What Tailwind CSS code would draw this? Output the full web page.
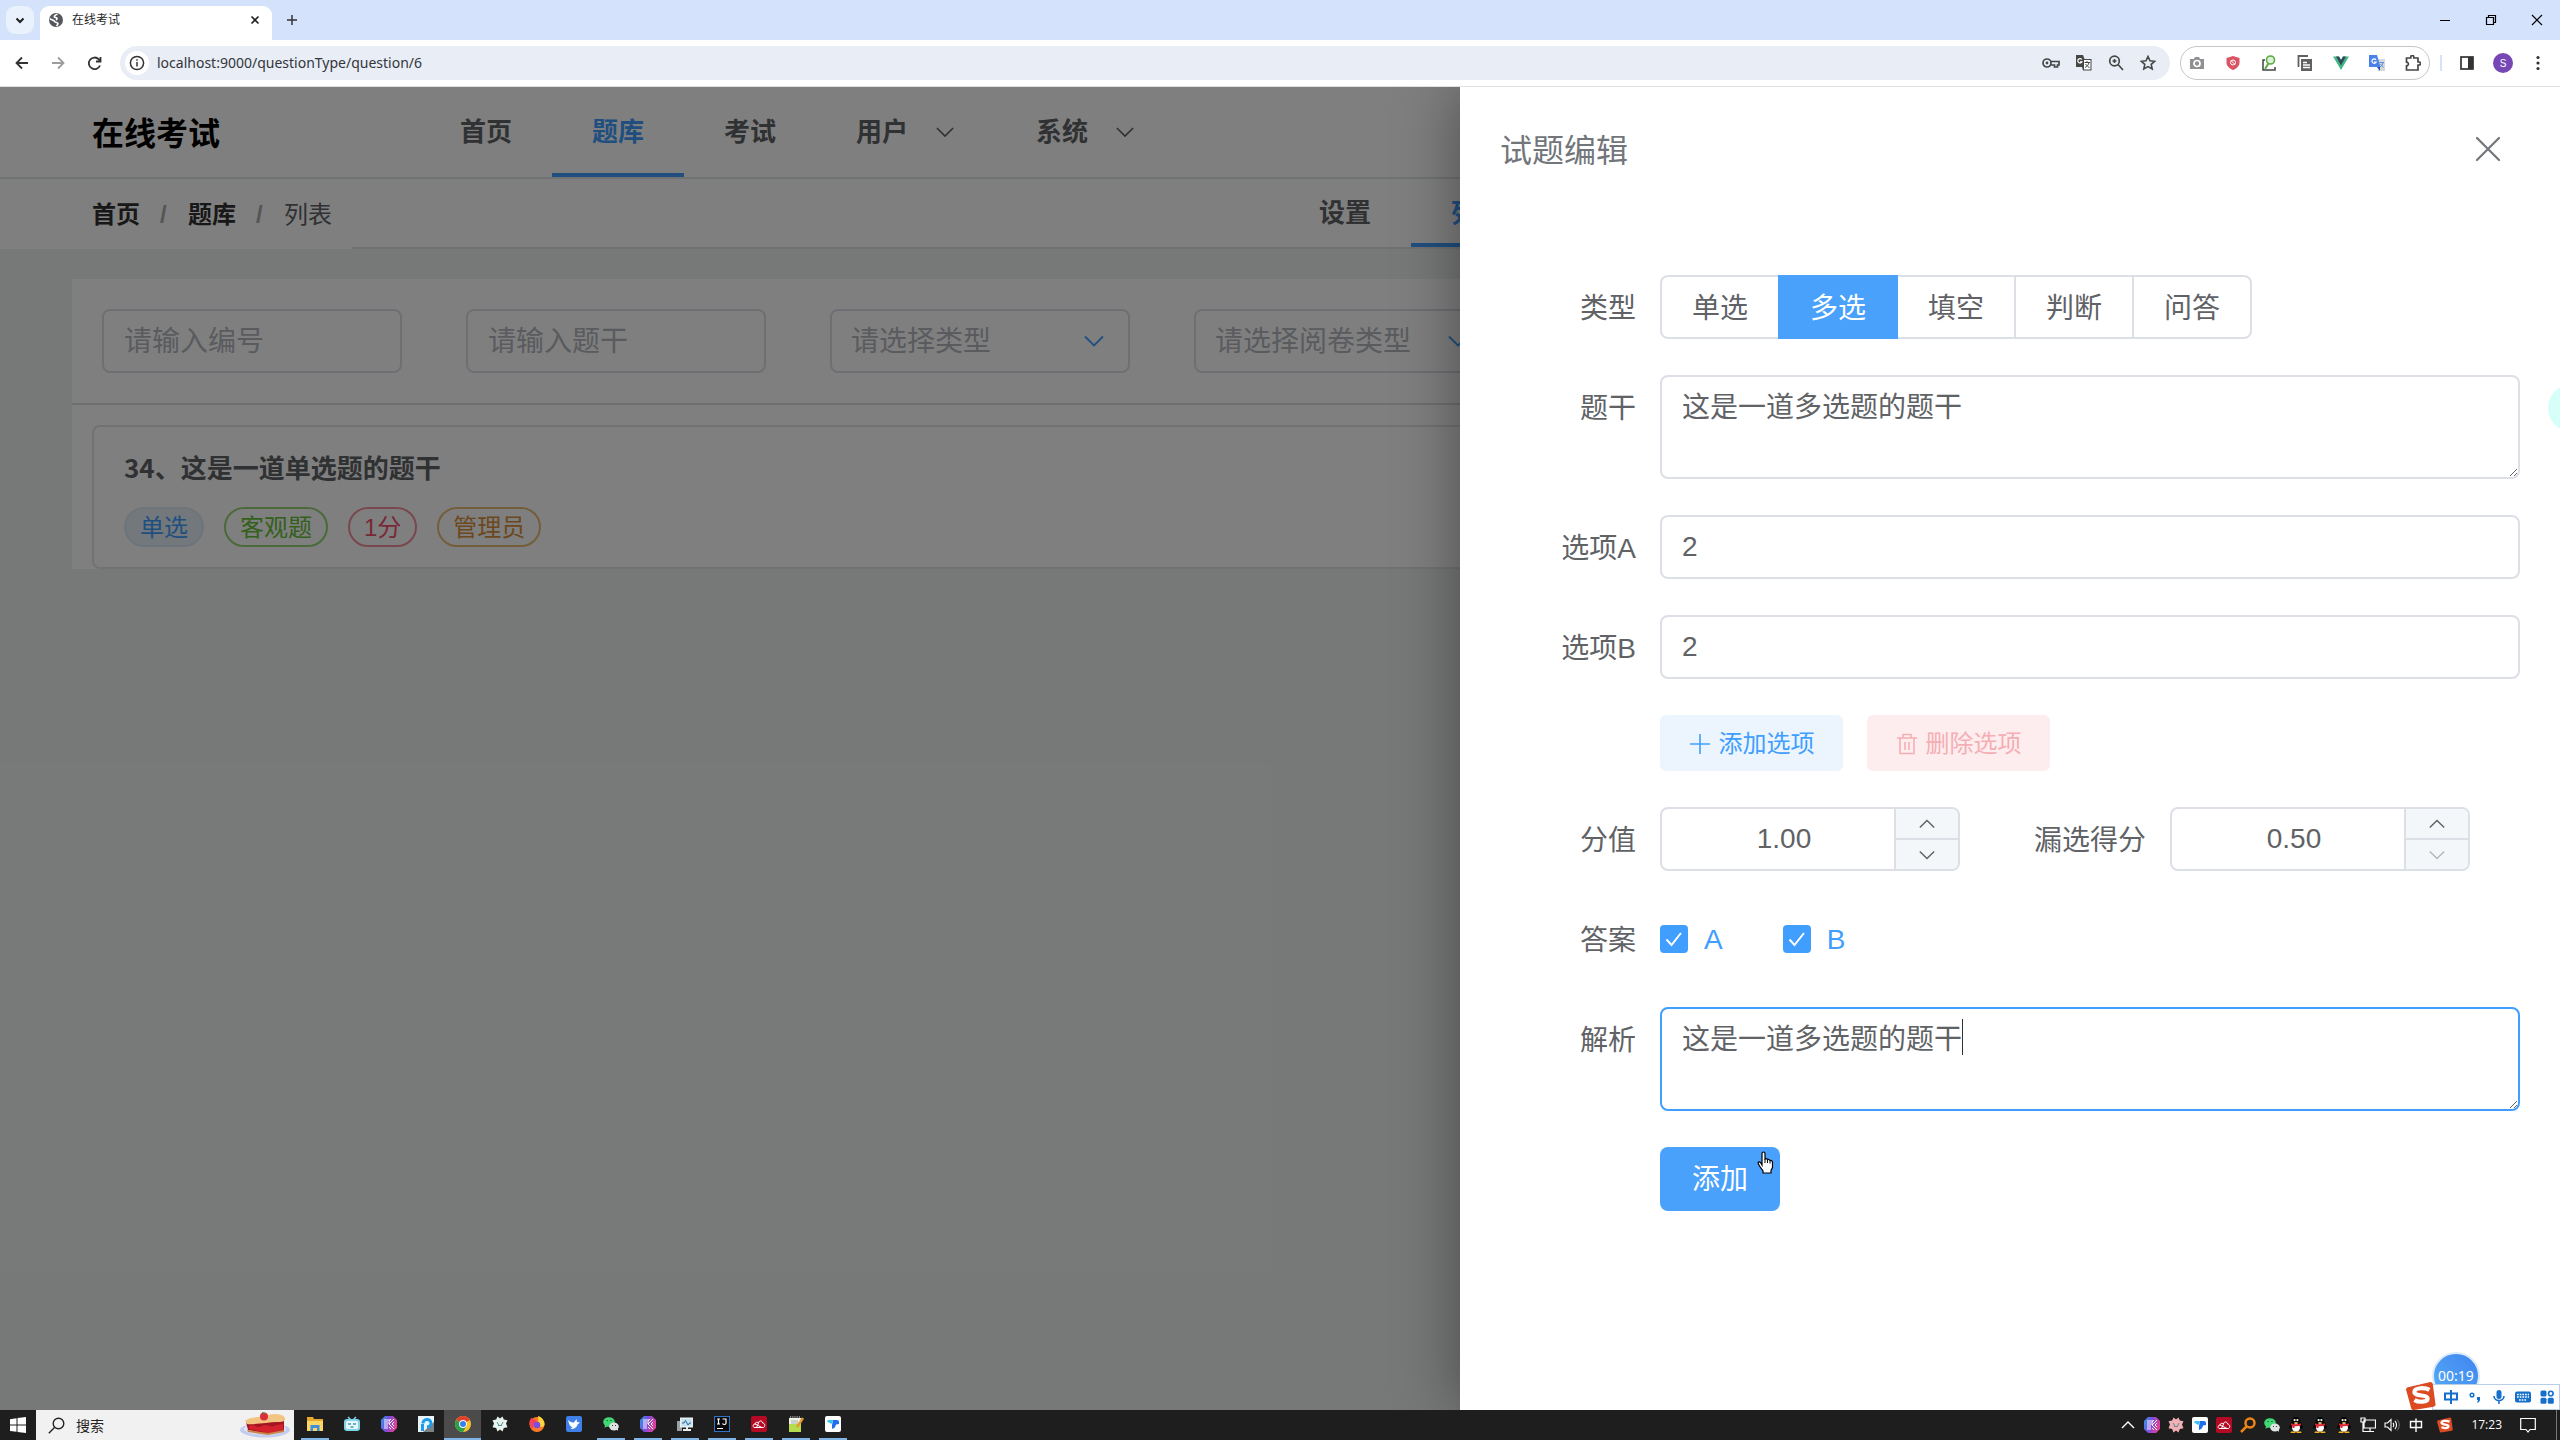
<!DOCTYPE html>
<html lang="zh-CN">
<head>
<meta charset="utf-8">
<meta name="viewport" content="width=device-width, initial-scale=1">
<title>在线考试</title>
<script src="https://cdn.jsdelivr.net/npm/@tailwindcss/browser@4"></script>
</head>
<body class="flex h-screen flex-col overflow-hidden bg-white font-['Liberation_Sans','Noto_Sans_CJK_SC',sans-serif] text-[#606266]">

<!-- Shared icon symbols -->
<svg class="absolute size-0" aria-hidden="true">
  <defs>
    <linearGradient id="kgrad" x1="0" y1="0" x2="1" y2="0.3"><stop offset="0" stop-color="#2f9be8"/><stop offset=".5" stop-color="#7b4be0"/><stop offset="1" stop-color="#e0409a"/></linearGradient>
  </defs>
  <symbol id="chev-down" viewBox="0 0 20 14"><path d="M1 2.500l9 9 9-9" fill="none" stroke="currentColor" stroke-width="1.800"/></symbol>
  <symbol id="chev-up" viewBox="0 0 20 14"><path d="M1 11.500l9-9 9 9" fill="none" stroke="currentColor" stroke-width="1.800"/></symbol>
  <symbol id="kapp" viewBox="0 0 16 16"><path d="M4 0h8l4 4v8l-4 4H4l-4-4V4z" fill="url(#kgrad)"/><path d="M4 3v10M6 3v10M8 3v5M13 3L8 8l5 5M10 3L8 5M8 11l2 2M13 6l-2 2 2 2" fill="none" stroke="#fff" stroke-width="1"/></symbol>
  <symbol id="dingfly" viewBox="0 0 16 16"><rect width="16" height="16" rx="2" fill="#fff"/><path d="M2 5.500Q2 4 4 4h4l-1.500 4z" fill="#35c3f2"/><path d="M8 4h4q2 0 2 2v2l-3 .500q-.500 3.500-4 4.500V9z" fill="#1e6ff0"/></symbol>
  <symbol id="redcloud" viewBox="0 0 16 16"><rect width="16" height="16" rx="2" fill="#b50a24"/><path d="M3 11.500c-1.500-1-1-3.500 1-3.500 0-1.500 2-2.500 3.500-1 .5-3 4-2.500 4 0 2.500 0 3 3.500 1 4.500zM4 8l7 3.500M7.500 7l-2 4.500" fill="none" stroke="#fff" stroke-width="1"/></symbol>
  <symbol id="wechat" viewBox="0 0 16 16"><ellipse cx="6" cy="6" rx="5.800" ry="4.800" fill="#3fd873"/><path d="M2 9l-.5 2.800L5 10z" fill="#3fd873"/><ellipse cx="11" cy="10.500" rx="4.800" ry="4" fill="#dfe3e2"/><path d="M13 13l2 2-.2-3z" fill="#dfe3e2"/><path d="M3.500 4.500h1.200M7.300 4.500h1.200M9 9.500h1M12 9.500h1" stroke="#23432f" stroke-width="1"/></symbol>
  <symbol id="qq" viewBox="0 0 16 16"><path d="M8 0c3 0 4.300 2 4.300 5 1.500 2 3 5 2.500 6.500-.5.600-1.300-.5-1.800-1 0 4-10 4-10 0-.5.500-1.300 1.600-1.800 1C.7 10 2.200 7 3.700 5 3.700 2 5 0 8 0z" fill="#050505"/><ellipse cx="8" cy="10.500" rx="4" ry="4.300" fill="#fff"/><circle cx="6.600" cy="3" r="1.100" fill="#fff"/><circle cx="9.400" cy="3" r="1.100" fill="#fff"/><path d="M5.500 5h5L8 6.300z" fill="#f5b21c"/><path d="M3.200 6.200c3 1.500 6.600 1.500 9.600 0l.4 2C9.500 9.600 6.500 9.600 2.800 8.200zM4.500 8.500h2V11h-2z" fill="#e0202a"/><path d="M3 14.500h4.500V16H2.500zM8.500 14.500H13l.5 1.500h-5z" fill="#f5b21c"/></symbol>
  <symbol id="flower" viewBox="0 0 16 16"><path d="M5.500.5l2.500 2 2.500-2 1.300 3 3.700.8-1.500 3.200 1.500 3.700-3.700.8-1.300 3.500-2.500-2-2.500 2-1.300-3.500-3.700-.8L2 7.500.5 4.300l3.700-.8z" fill="currentColor"/><path d="M5 6l2.500 4M9 10l2-4M6 9.500h4" stroke="#5a8f94" stroke-width="1" fill="none"/></symbol>
  <symbol id="sogou" viewBox="0 0 32 32"><path d="M1 7L26 1q2 0 2.500 2l3 22q0 2-2 2.500L8 31q-2 0-2.500-2L0 9z" fill="#dc4a22"/><path d="M25 9.500c-5-3-16-2.500-16 2.200 0 5 14 2.500 14 7 0 4-9.500 4.500-14 1.500" fill="none" stroke="#fff" stroke-width="4.500"/></symbol>
</svg>

<!-- Browser frame -->
<header class="shrink-0">
  <div class="flex h-10 items-center bg-[#d5e2fb] text-[#1f1f1f]">
    <button aria-label="搜索标签页" class="ml-1.5 grid size-7 place-items-center rounded-[9px] bg-[#e9f1fd]"><svg class="size-3" viewBox="0 0 12 12"><path d="M2.500 4.500L6 8l3.500-3.500" fill="none" stroke="#1f1f1f" stroke-width="2"/></svg></button>
    <div class="ml-1.5 mt-1.5 flex h-[34px] w-[232px] items-center self-end rounded-t-[9px] bg-white px-[9px] pb-1.5">
      <svg class="size-3.5" viewBox="0 0 14 14"><circle cx="7" cy="7" r="7" fill="#54575b"/><path d="M8.500 1.200C5 2 4.500 4.300 6.500 4.500c2 .2 2 1.500.5 2.500M1 5.500c1.500 1.800 4 1.500 5 3.300.5 1.200 2.500.2 3 1.700.2 1-.8 1.200-1.500 2.500" fill="none" stroke="#fff" stroke-width="1.600"/></svg>
      <span class="ml-[9px] flex-1 text-xs">在线考试</span>
      <button aria-label="关闭标签页" class="grid size-4 place-items-center"><svg class="size-2.5" viewBox="0 0 10 10"><path d="M1.500 1.500l7 7M8.500 1.500l-7 7" stroke="#1f1f1f" stroke-width="1.600"/></svg></button>
    </div>
    <button aria-label="新标签页" class="ml-3 grid size-4 place-items-center"><svg class="size-3" viewBox="0 0 12 12"><path d="M6 1v10M1 6h10" stroke="#333" stroke-width="1.500"/></svg></button>
    <div class="ml-auto flex items-center gap-[34px] pr-[17px] text-black">
      <button aria-label="最小化"><svg class="block size-3" viewBox="0 0 12 12"><path d="M1 6.500h10" stroke="currentColor"/></svg></button>
      <button aria-label="还原"><svg class="block size-3" viewBox="0 0 12 12"><path d="M1.500 3.500h7v7h-7zM3.500 3.500v-2h7v7h-2" fill="none" stroke="currentColor" stroke-width="1.200"/></svg></button>
      <button aria-label="关闭"><svg class="block size-3" viewBox="0 0 12 12"><path d="M1 1l10 10M11 1L1 11" stroke="currentColor" stroke-width="1.200"/></svg></button>
    </div>
  </div>
  <div class="flex h-[47px] items-center border-b border-[#dfe1e5] bg-white text-[#444746]">
    <div class="flex gap-[22px] pl-[15px]">
      <button aria-label="后退"><svg class="block size-3.5" viewBox="0 0 14 14"><path d="M13 7H2M7 1.500L1.500 7 7 12.500" fill="none" stroke="#333" stroke-width="1.800"/></svg></button>
      <button aria-label="前进"><svg class="block size-3.5" viewBox="0 0 14 14"><path d="M1 7h11M7 1.500L12.500 7 7 12.500" fill="none" stroke="#9b9d9f" stroke-width="1.800"/></svg></button>
      <button aria-label="重新加载"><svg class="block size-[15px]" viewBox="0 0 15 15"><path d="M13 9.500A5.800 5.800 0 1 1 11.800 3.300L13.500 5M13.500 1v4.500H9" fill="none" stroke="#333" stroke-width="1.800"/></svg></button>
    </div>
    <div class="ml-[18px] flex h-[34px] flex-1 items-center rounded-full bg-[#e9edf6] pl-[5px] pr-3.5">
      <button aria-label="网站信息" class="grid size-6 place-items-center rounded-full bg-white"><svg class="size-4" viewBox="0 0 16 16"><circle cx="8" cy="8" r="6.600" fill="none" stroke="#333" stroke-width="1.500"/><path d="M8 7v4.500M8 4.200v1.600" stroke="#333" stroke-width="1.500"/></svg></button>
      <input aria-label="地址" value="localhost:9000/questionType/question/6" class="ml-2 flex-1 bg-transparent font-['Noto_Sans',sans-serif] text-sm text-[#33363a] outline-none">
      <div class="flex items-center gap-4">
        <svg class="h-4 w-[18px]" viewBox="0 0 18 16"><circle cx="5" cy="8" r="4" fill="none" stroke="currentColor" stroke-width="1.700"/><circle cx="5" cy="8" r="1.400" fill="currentColor"/><path d="M9 6.500h8V10h-1.500v2h-3v-2H9" fill="none" stroke="currentColor" stroke-width="1.700"/></svg>
        <svg class="size-4" viewBox="0 0 16 16"><path d="M0 0h7l1.500 4H15.500v11.500H7L6 12H0z" fill="#444746"/><path d="M8 5h6.500v9.500H8z" fill="#fff"/><path d="M5.800 4.500a2.200 2.200 0 1 0 .2 2.300H4" fill="none" stroke="#fff" stroke-width="1.200"/><path d="M8.500 7.500h5.500M11 6v1.500M13 7.500c-.5 2.500-2 4-4 5M9.500 9l4 4" fill="none" stroke="#444746"/></svg>
        <svg class="size-4" viewBox="0 0 16 16"><circle cx="6.500" cy="6" r="4.800" fill="none" stroke="currentColor" stroke-width="1.700"/><path d="M6.500 4v4M4.500 6h4M10 9.500l5 5.500" stroke="currentColor" stroke-width="1.700"/></svg>
        <svg class="size-4" viewBox="0 0 16 16"><path d="M8 1.500l2 4.300 4.700.5-3.500 3.100 1 4.600L8 11.600 3.800 14l1-4.600L1.300 6.300 6 5.800z" fill="none" stroke="currentColor" stroke-width="1.600"/></svg>
      </div>
    </div>
    <div class="ml-2.5 flex h-[34px] w-[250px] items-center justify-between rounded-full border border-[#c4c7c5] px-2">
      <svg class="size-4" viewBox="0 0 16 16"><path d="M1 4h4l1-2h4l1 2h4v10H1z" fill="#8e9092"/><circle cx="8" cy="8.500" r="3" fill="none" stroke="#fff" stroke-width="1.700"/></svg>
      <svg class="size-4" viewBox="0 0 16 16"><path d="M8 1l6.500 2v4.500c0 3.500-3 6-6.500 7.500C4.500 13.500 1.500 11 1.500 7.500V3z" fill="#d95563"/><circle cx="8" cy="7.500" r="2.500" fill="none" stroke="#fff"/><path d="M6.300 5.800l3.400 3.400" stroke="#fff"/></svg>
      <svg class="size-4" viewBox="0 0 16 16"><path d="M4 5H2v10h12v-3" fill="none" stroke="#444" stroke-width="1.500"/><circle cx="9.500" cy="5" r="4" fill="#d9f0dc" stroke="#5cab3c" stroke-width="1.600"/><path d="M7.500 8.500L4 14" stroke="#5cab3c" stroke-width="2"/></svg>
      <svg class="size-4" viewBox="0 0 16 16"><path d="M11 1H1.500v11" fill="none" stroke="#5f6163" stroke-width="1.800"/><path d="M4 4h11v12H4z" fill="#5f6163"/><path d="M6 7.500h4M6 10h7M6 12.500h7" stroke="#fff" stroke-width="1.300"/></svg>
      <svg class="size-4" viewBox="0 0 16 16"><path d="M0 1.500h6L8 5l2-3.500h6L8 15z" fill="#42b883"/><path d="M3 1.500h3L8 5l2-3.500h3L8 10.500z" fill="#35495e"/></svg>
      <svg class="size-4" viewBox="0 0 16 16"><path d="M7 4h9v12H9z" fill="#d6d8da"/><path d="M0 0h8l3.500 12H0z" fill="#4b82ea"/><path d="M11 12v4l-3-4z" fill="#2b55b8"/><path d="M7 4.800a2.200 2.200 0 1 0 .2 2.200H5" fill="none" stroke="#fff" stroke-width="1.200"/><path d="M10.500 7.500H15M14 8c-.5 2-1.500 3-3 4M11.500 9l3 3.500" fill="none" stroke="#5f8fd8"/></svg>
      <svg class="size-4" viewBox="0 0 16 16"><path d="M1.500 3h4.300V2a1.500 1.500 0 0 1 3 0v1H13v4h1a1.500 1.500 0 0 1 0 3h-1v5H1.500v-4.200c2.500 0 2.500-3.600 0-3.600z" fill="none" stroke="#444746" stroke-width="1.700"/></svg>
    </div>
    <span class="ml-2.5 h-4 w-0.5 bg-[#d5e2fb]"></span>
    <div class="flex items-center gap-[19px] pl-[18px] pr-4">
      <svg class="size-3.5" viewBox="0 0 14 14"><rect x="1" y="1" width="12" height="12" fill="none" stroke="#333" stroke-width="1.700"/><path d="M8 1h5v12H8z" fill="#333"/></svg>
      <span class="grid size-5 place-items-center rounded-full bg-[#7747b5] text-[10px] text-white">S</span>
      <svg class="h-4 w-3" viewBox="0 0 12 16"><g fill="#333"><circle cx="6" cy="2.500" r="1.600"/><circle cx="6" cy="8" r="1.600"/><circle cx="6" cy="13.500" r="1.600"/></g></svg>
    </div>
  </div>
</header>

<div class="relative min-h-0 flex-1 overflow-hidden bg-[#eff3f2]">
  <!-- Main page -->
  <nav class="flex h-[92px] border-b-2 border-[#e0e6e6] bg-white pl-[92px] text-[26px] font-bold text-[#606266] *:pt-1">
    <a href="#" class="flex w-[328px] items-center text-[32px] text-black">在线考试</a>
    <a href="#" class="flex items-center border-b-4 border-transparent px-10">首页</a>
    <a href="#" class="flex items-center border-b-4 border-[#409eff] px-10 text-[#409eff]">题库</a>
    <a href="#" class="flex items-center border-b-4 border-transparent px-10">考试</a>
    <a href="#" class="flex items-center gap-7 border-b-4 border-transparent pl-10 pr-[42px]">用户<svg class="h-3.5 w-[18px]"><use href="#chev-down"/></svg></a>
    <a href="#" class="flex items-center gap-7 border-b-4 border-transparent pl-10 pr-[42px]">系统<svg class="h-3.5 w-[18px]"><use href="#chev-down"/></svg></a>
  </nav>
  <div class="flex h-[70px] bg-white">
    <div class="flex w-[352px] items-center gap-5 pl-[92px] pt-0.5 text-2xl">
      <a href="#" class="font-bold text-[#303133]">首页</a><span class="w-2 font-bold text-[#a8abb2]">/</span>
      <a href="#" class="font-bold text-[#303133]">题库</a><span class="w-2 font-bold text-[#a8abb2]">/</span>
      <span class="whitespace-nowrap">列表</span>
    </div>
    <div class="flex flex-1 justify-end border-b-2 border-[#dfe3e6] pr-[1017px] text-[26px] font-bold *:pt-1">
      <a href="#" class="flex items-center border-b-4 border-transparent px-10">设置</a>
      <a href="#" class="flex items-center border-b-4 border-[#409eff] px-10 text-[#409eff]">列表</a>
    </div>
  </div>
  <main class="mx-[72px] mt-[30px] bg-white">
    <form class="flex gap-16 border-b-2 border-[#dcdfe2] px-[30px] py-[30px] text-[28px]">
      <input aria-label="编号" placeholder="请输入编号" class="h-16 w-[300px] rounded-lg border-2 border-[#dcdfe6] px-5 pt-0.5 placeholder:text-[#b4b7bd]">
      <input aria-label="题干" placeholder="请输入题干" class="h-16 w-[300px] rounded-lg border-2 border-[#dcdfe6] px-5 pt-0.5 placeholder:text-[#b4b7bd]">
      <div class="relative">
        <select aria-label="类型" class="h-16 w-[300px] appearance-none rounded-lg border-2 border-[#dcdfe6] pl-[19px] pr-5 pt-0.5 text-[#b4b7bd]"><option>请选择类型</option></select>
        <svg class="pointer-events-none absolute right-[26px] top-6 h-4 w-5 text-[#409eff]"><use href="#chev-down"/></svg>
      </div>
      <div class="relative">
        <select aria-label="阅卷类型" class="h-16 w-[300px] appearance-none rounded-lg border-2 border-[#dcdfe6] pl-[19px] pr-5 pt-0.5 text-[#b4b7bd]"><option>请选择阅卷类型</option></select>
        <svg class="pointer-events-none absolute right-[26px] top-6 h-4 w-5 text-[#409eff]"><use href="#chev-down"/></svg>
      </div>
    </form>
    <div class="px-5 pt-5">
      <article class="rounded-lg border-2 border-[#e0e4e8] px-[30px] pb-5 pt-5">
        <h2 class="font-['Noto_Sans_CJK_SC',sans-serif] text-[26px] font-bold leading-10">34、这是一道单选题的题干</h2>
        <div class="mt-5 flex gap-5 text-2xl *:flex *:h-10 *:items-center *:rounded-full *:border-2 *:px-3.5 *:pt-0.5">
          <span class="border-[#dbe9f5] bg-[#e6f1f8] text-[#409eff]">单选</span>
          <span class="border-[#95d475] text-[#67c23a]">客观题</span>
          <span class="border-[#f0909c] text-[#f0506c]">1分</span>
          <span class="border-[#e6bc72] text-[#d9903c]">管理员</span>
        </div>
      </article>
    </div>
  </main>

  <div class="absolute inset-0 bg-black/50"></div>

  <!-- Drawer -->
  <aside role="dialog" aria-label="试题编辑" class="absolute inset-y-0 right-0 w-[1100px] max-w-full bg-white px-10 shadow-[0_0_60px_rgba(0,0,0,0.4)]">
    <header class="flex items-center justify-between pt-10">
      <h1 class="text-[32px] leading-[48px] text-[#72767b]">试题编辑</h1>
      <button aria-label="关闭" class="mb-1 mr-5"><svg class="block size-6" viewBox="0 0 24 24"><path d="M1 1l22 22M23 1L1 23" stroke="#72767b" stroke-width="2.200" stroke-linecap="round"/></svg></button>
    </header>
    <form class="mt-[100px] flex flex-col gap-9 text-[28px]">
      <div class="flex">
        <span class="h-16 w-40 shrink-0 pr-6 pt-0.5 text-right leading-[64px]">类型</span>
        <div role="radiogroup" aria-label="类型" class="flex h-16 *:relative *:flex *:w-[120px] *:items-center *:justify-center *:border-2 *:border-[#dcdfe6] *:pt-1 *:not-first:-ml-0.5">
          <label class="rounded-l-lg"><input type="radio" name="kind" class="sr-only">单选</label>
          <label class="z-10 border-[#49a1fb]! bg-[#49a1fb] text-white"><input type="radio" name="kind" checked class="sr-only">多选</label>
          <label><input type="radio" name="kind" class="sr-only">填空</label>
          <label><input type="radio" name="kind" class="sr-only">判断</label>
          <label class="rounded-r-lg"><input type="radio" name="kind" class="sr-only">问答</label>
        </div>
      </div>
      <div class="flex">
        <label for="stem" class="h-16 w-40 shrink-0 pr-6 pt-0.5 text-right leading-[64px]">题干</label>
        <textarea id="stem" class="h-[104px] flex-1 resize rounded-lg border-2 border-[#dcdfe6] px-5 pt-2.5 leading-[42px]">这是一道多选题的题干</textarea>
      </div>
      <div class="flex">
        <label for="optA" class="h-16 w-40 shrink-0 pr-6 pt-0.5 text-right leading-[64px]">选项A</label>
        <input id="optA" value="2" class="h-16 min-w-0 flex-1 rounded-lg border-2 border-[#dcdfe6] px-5">
      </div>
      <div class="flex">
        <label for="optB" class="h-16 w-40 shrink-0 pr-6 pt-0.5 text-right leading-[64px]">选项B</label>
        <input id="optB" value="2" class="h-16 min-w-0 flex-1 rounded-lg border-2 border-[#dcdfe6] px-5">
      </div>
      <div class="flex gap-6 pl-40 text-2xl">
        <button type="button" class="flex h-14 w-[183px] items-center justify-center gap-2 rounded-md bg-[#ecf5fd] pt-0.5 text-[#409eff]"><svg class="size-[22px]" viewBox="0 0 22 22"><path d="M11 1v20M1 11h20" stroke="currentColor" stroke-width="1.600"/></svg>添加选项</button>
        <button type="button" disabled class="flex h-14 w-[183px] items-center justify-center gap-2 rounded-md bg-[#fdedee] pt-0.5 text-[#f5aeb4]"><svg class="size-[22px]" viewBox="0 0 22 22"><path d="M1 5h20M7 5V1.500h8V5M4 5v15.500h14V5M9 9v8M13 9v8" fill="none" stroke="currentColor" stroke-width="1.600"/></svg>删除选项</button>
      </div>
      <div class="flex">
        <label for="score" class="h-16 w-40 shrink-0 pr-6 pt-0.5 text-right leading-[64px]">分值</label>
        <div class="flex h-16 w-[300px] overflow-hidden rounded-lg border-2 border-[#dcdfe6]">
          <input id="score" value="1.00" class="min-w-0 flex-1 pl-3 text-center">
          <div class="flex w-16 flex-col border-l-2 border-[#dcdfe6] bg-[#f4f7f9]">
            <button type="button" aria-label="增加" class="grid flex-1 place-items-center border-b-2 border-[#dcdfe6]"><svg class="h-3 w-4"><use href="#chev-up"/></svg></button>
            <button type="button" aria-label="减少" class="grid flex-1 place-items-center"><svg class="h-3 w-4"><use href="#chev-down"/></svg></button>
          </div>
        </div>
        <label for="partial" class="h-16 w-[210px] shrink-0 pr-6 pt-0.5 text-right leading-[64px]">漏选得分</label>
        <div class="flex h-16 w-[300px] overflow-hidden rounded-lg border-2 border-[#dcdfe6]">
          <input id="partial" value="0.50" class="min-w-0 flex-1 pl-3 text-center">
          <div class="flex w-16 flex-col border-l-2 border-[#dcdfe6] bg-[#f4f7f9]">
            <button type="button" aria-label="增加" class="grid flex-1 place-items-center border-b-2 border-[#dcdfe6]"><svg class="h-3 w-4"><use href="#chev-up"/></svg></button>
            <button type="button" disabled aria-label="减少" class="grid flex-1 place-items-center text-[#b4b8be]"><svg class="h-3 w-4"><use href="#chev-down"/></svg></button>
          </div>
        </div>
      </div>
      <div class="flex h-16 items-center">
        <span class="h-16 w-40 shrink-0 pr-6 pt-0.5 text-right leading-[64px]">答案</span>
        <div class="flex gap-[60px] text-[#409eff]">
          <label class="flex items-center gap-4"><span class="relative grid size-7 place-items-center"><input type="checkbox" checked class="size-7 appearance-none rounded bg-[#409eff]"><svg class="pointer-events-none absolute size-[18px]" viewBox="0 0 18 18"><path d="M1.500 9.500l5 5.500L16 3" fill="none" stroke="#fff" stroke-width="2"/></svg></span><span class="pt-0.5">A</span></label>
          <label class="flex items-center gap-4"><span class="relative grid size-7 place-items-center"><input type="checkbox" checked class="size-7 appearance-none rounded bg-[#409eff]"><svg class="pointer-events-none absolute size-[18px]" viewBox="0 0 18 18"><path d="M1.500 9.500l5 5.500L16 3" fill="none" stroke="#fff" stroke-width="2"/></svg></span><span class="pt-0.5">B</span></label>
        </div>
      </div>
      <div class="flex">
        <label for="analysis" class="h-16 w-40 shrink-0 pr-6 pt-0.5 text-right leading-[64px]">解析</label>
        <div class="relative flex flex-1">
          <textarea id="analysis" class="h-[104px] flex-1 resize rounded-lg border-2 border-[#409eff] px-5 pt-2.5 leading-[42px]">这是一道多选题的题干</textarea>
          <span class="absolute left-[302px] top-3 h-9 w-px bg-[#303133]"></span>
        </div>
      </div>
      <div class="relative ml-40 w-[120px]">
        <button type="button" class="h-16 w-full rounded-lg bg-[#49a1fb] pt-0.5 text-white">添加</button>
        <svg class="absolute right-1.5 top-1 h-[23px] w-[17px]" viewBox="0 0 17 23"><path d="M5 14V2.500q0-1.500 1.500-1.500T8 2.500V8q1.500-1 2.500.5Q12 7.700 13 9.500q2-.3 2.500 1.500v5.500l-1.500 3V22H6v-2L2.500 15 1 12q.5-2 2.500-.5z" fill="#fff" stroke="#000" stroke-width="1.200"/><path d="M8 8v4M10.500 9v3M13 10v2.500" stroke="#000" stroke-width="1"/></svg>
      </div>
    </form>
  </aside>

  <!-- Floating helpers -->
  <span class="absolute -right-9 top-[297px] size-12 rounded-full bg-[#d5fff8]"></span>
  <div class="absolute bottom-[10px] right-20 grid size-12 place-items-center rounded-full border-2 border-[#dcebfb] bg-linear-to-bl from-[#3f83ee] to-[#58aef8] font-['Noto_Sans',sans-serif] text-sm text-white">00:19</div>
  <div class="absolute bottom-0 right-0 flex h-[26px] w-32 items-center border border-[#b9cfe6] bg-white pl-2.5 text-[#1470cc]">
    <svg class="absolute -left-7 -top-1 h-[30px] w-8"><use href="#sogou"/></svg>
    <div class="flex items-center gap-2 text-[#1470cc]">
      <svg class="size-4" viewBox="0 0 16 16"><path d="M2 4.500h12v6H2zM8 1v14" fill="none" stroke="currentColor" stroke-width="2"/></svg>
      <svg class="size-4" viewBox="0 0 16 16"><circle cx="5" cy="6" r="1.800" fill="none" stroke="currentColor" stroke-width="1.500"/><path d="M10 8h3v3q0 2-3 3l1-3h-1z" fill="currentColor"/></svg>
      <svg class="size-4" viewBox="0 0 16 16"><rect x="5.500" y="1" width="5" height="9" rx="2.500" fill="currentColor"/><path d="M3 7c0 6 10 6 10 0M8 11.500V15" fill="none" stroke="currentColor" stroke-width="1.600"/></svg>
      <svg class="size-4" viewBox="0 0 16 16"><rect y="2.500" width="16" height="11" rx="2" fill="currentColor"/><path d="M2 5.500h12M2 8h12M4 11h8" stroke="#fff" stroke-width="1.400" stroke-dasharray="1.700 1"/></svg>
      <svg class="size-4" viewBox="0 0 16 16"><g fill="currentColor"><rect x="1.500" y="1.500" width="6" height="6" rx="1.500"/><rect x="1.500" y="8.800" width="6" height="6" rx="1.500"/><rect x="8.800" y="8.800" width="6" height="6" rx="1.500"/></g><circle cx="11.800" cy="4.500" r="2.300" fill="none" stroke="currentColor" stroke-width="1.600"/></svg>
    </div>
  </div>
</div>

<!-- Taskbar -->
<footer class="flex h-[30px] shrink-0 items-stretch bg-[#1e1e1e] text-white">
  <button aria-label="开始" class="grid w-9 place-items-center"><svg class="size-4" viewBox="0 0 16 16"><path d="M0 2.200l6.500-1v6.300H0zM7.500 1L16 0v7.500H7.500zM0 8.500h6.500v6.300L0 14zM7.500 8.500H16V16l-8.500-1z" fill="#fff"/></svg></button>
  <div class="flex w-[258px] items-center bg-[#f1f1f1] pl-3 text-[#222]">
    <svg class="size-[17px]" viewBox="0 0 17 17"><circle cx="10.500" cy="6.500" r="5.300" fill="none" stroke="#222" stroke-width="1.400"/><path d="M6.500 10.500L.8 16.300" stroke="#222" stroke-width="1.400"/></svg>
    <input aria-label="搜索" placeholder="搜索" class="ml-[11px] w-24 pt-0.5 text-sm placeholder:text-[#222]">
    <svg class="ml-auto mr-1 h-[26px] w-[50px]" viewBox="0 0 50 26"><ellipse cx="25" cy="18" rx="25" ry="7.500" fill="#c3cdf0"/><ellipse cx="25" cy="17" rx="21" ry="5.500" fill="#e3e8fa"/><path d="M6 10l38-3v12l-16 3L8 18z" fill="#a31621"/><path d="M9 14c5-3 8 3 13 0s8 2 12 0 6-1 9-2v6l-15 3-19-4z" fill="#d3212d"/><path d="M5 9C10 4 20 6 28 3c7-2 15-1 17 3 1 3-3 4-8 4-9 0-22 3-30 2z" fill="#f3c583"/><path d="M7 18l21 3 16-3v2l-16 3-20-3z" fill="#c98446"/><circle cx="24" cy="4.500" r="4" fill="#d9303c"/><path d="M22 .5l4 1" stroke="#4a9a3c"/></svg>
  </div>
  <div class="ml-0.5 flex *:grid *:w-[37px] *:place-items-center *:border-b-2 *:border-transparent">
    <button aria-label="文件资源管理器" class="relative after:absolute after:-bottom-0.5 after:h-0.5 after:w-7 after:bg-[#7fb5e6]"><svg class="size-4" viewBox="0 0 16 16"><path d="M0 1h6l1 2h9v12H0z" fill="#e8a92b"/><path d="M0 5h16v10H0z" fill="#fbd667"/><path d="M3.500 15V9h9v6h-2.500v-3H6v3z" fill="#3f90d8"/></svg></button>
    <button aria-label="视频"><svg class="size-4" viewBox="0 0 16 16"><path d="M4 1l3 3M12 1L9 4" stroke="#7fd4ea" stroke-width="1.500"/><rect y="3" width="16" height="12" rx="3" fill="#7fd4ea"/><rect x="2" y="5" width="12" height="8" rx="1.500" fill="#e8f8fc"/><path d="M4 8h3M9 8h3M6.500 11h3" stroke="#3d9ebd" stroke-width="1.300"/></svg></button>
    <button aria-label="应用"><svg class="size-4"><use href="#kapp"/></svg></button>
    <button aria-label="图片处理"><svg class="size-4" viewBox="0 0 16 16"><path d="M0 0h16v16H0z" fill="#e9f4fa"/><path d="M16 6v10H5z" fill="#7a8288"/><path d="M4.500 15V8M5 7.500a4 3.800 0 1 1 4 3.500" fill="none" stroke="#1e9ce8" stroke-width="3"/></svg></button>
    <button aria-label="Chrome" class="border-[#7fb5e6]! bg-[#4b4b4b]"><svg class="size-4" viewBox="0 0 16 16"><circle cx="8" cy="8" r="8" fill="#f7c52b"/><path d="M8 8L1.100 4a8 8 0 0 1 13.800 0z" fill="#e0412f"/><path d="M8 8L1.100 4A8 8 0 0 0 8 16l3.500-6z" fill="#2c9f4b"/><circle cx="8" cy="8" r="3.900" fill="#fff"/><circle cx="8" cy="8" r="3" fill="#3a7ff0"/></svg></button>
    <button aria-label="工具"><svg class="size-4 text-[#e8f4ee]"><use href="#flower"/></svg></button>
    <button aria-label="Firefox"><svg class="size-4" viewBox="0 0 16 16"><circle cx="8" cy="8.500" r="7.500" fill="#ff7a26"/><path d="M9 0c4 1 7 5 6.500 9-3 5-8-1-6-4z" fill="#ffd43c"/><path d="M.5 8C0 4 2 3 2.500 1.500 4 4 6 3 8 5l-5 8z" fill="#f5415a"/><circle cx="8" cy="9" r="3.300" fill="#7a4fe0"/></svg></button>
    <button aria-label="飞鸟"><svg class="size-4" viewBox="0 0 16 16"><rect width="16" height="16" rx="2" fill="#3f7fe8"/><path d="M2 4c2 2 4 2.500 6 2.500L10.500 3l.5 3 3 .5-2.500 2c-.5 3-4 5-7 4.500l2-1.500C4 10.500 3 8 2 4z" fill="#fff"/></svg></button>
    <button aria-label="微信" class="relative after:absolute after:-bottom-0.5 after:h-0.5 after:w-7 after:bg-[#7fb5e6]"><svg class="size-4"><use href="#wechat"/></svg></button>
    <button aria-label="应用" class="relative after:absolute after:-bottom-0.5 after:h-0.5 after:w-7 after:bg-[#7fb5e6]"><svg class="size-4"><use href="#kapp"/></svg></button>
    <button aria-label="监视器" class="relative after:absolute after:-bottom-0.5 after:h-0.5 after:w-7 after:bg-[#7fb5e6]"><svg class="size-4" viewBox="0 0 16 16"><path d="M0 5h5v10H0z" fill="#9aa2a6"/><path d="M3 1.500h13v10H3z" fill="#e9edef"/><path d="M4.500 3h10v7h-10z" fill="#bfe3ef"/><path d="M5 7h2l1.500-2.500L11 9l1.500-2H14" fill="none" stroke="#2f5f9f"/><path d="M6 14h8M10 11v3" stroke="#e9edef" stroke-width="2"/></svg></button>
    <button aria-label="IDE" class="relative after:absolute after:-bottom-0.5 after:h-0.5 after:w-7 after:bg-[#7fb5e6]"><svg class="size-4" viewBox="0 0 16 16"><rect x=".5" y=".5" width="15" height="15" fill="#0a0a0c" stroke="#2e74c4"/><path d="M3 3h3M4.500 3v5M3 8h3M8.500 3H12v4q0 1.500-1.500 1.500T8.500 7.500M3 12.500h6" fill="none" stroke="#fff" stroke-width="1.200"/></svg></button>
    <button aria-label="云服务" class="relative after:absolute after:-bottom-0.5 after:h-0.5 after:w-7 after:bg-[#7fb5e6]"><svg class="size-4"><use href="#redcloud"/></svg></button>
    <button aria-label="记事本" class="relative after:absolute after:-bottom-0.5 after:h-0.5 after:w-7 after:bg-[#7fb5e6]"><svg class="size-4" viewBox="0 0 16 16"><path d="M1 2h12v14H1z" fill="#f1f3e8"/><path d="M1 8h12v8H1z" fill="#b6dc50"/><path d="M2 1h10" stroke="#888" stroke-width="2" stroke-dasharray="1.200 1"/><path d="M3 5h7M3 7h7" stroke="#a7adae"/><path d="M15 2l-6 9" stroke="#e39a2c" stroke-width="2.500"/></svg></button>
    <button aria-label="待办" class="relative after:absolute after:-bottom-0.5 after:h-0.5 after:w-7 after:bg-[#7fb5e6]"><svg class="size-4"><use href="#dingfly"/></svg></button>
  </div>
  <div class="ml-auto flex items-center gap-2">
    <svg class="size-4" viewBox="0 0 16 16"><path d="M2 11l6-6 6 6" fill="none" stroke="#fff" stroke-width="1.400"/></svg>
    <svg class="size-4"><use href="#kapp"/></svg>
    <svg class="size-4 text-[#f0b0b4]"><use href="#flower"/></svg>
    <svg class="size-4"><use href="#dingfly"/></svg>
    <svg class="size-4"><use href="#redcloud"/></svg>
    <svg class="size-4" viewBox="0 0 16 16"><circle cx="10" cy="6" r="4.500" fill="none" stroke="#ee8518" stroke-width="2.500"/><path d="M6.500 9.500L1 15" stroke="#ee8518" stroke-width="2.500"/></svg>
    <svg class="size-4"><use href="#wechat"/></svg>
    <svg class="size-4"><use href="#qq"/></svg>
    <svg class="size-4"><use href="#qq"/></svg>
    <svg class="size-4"><use href="#qq"/></svg>
    <svg class="size-4" viewBox="0 0 16 16"><path d="M4 3h11.500v8H4zM1 1h4v4H1zM3 5v9.500h11M10 11v3" fill="none" stroke="#fff" stroke-width="1.200"/></svg>
    <svg class="size-4" viewBox="0 0 16 16"><path d="M1 6h2.500L7 2.500v11L3.500 10H1zM9 6c1 1 1 3 0 4M11 4c2 2 2 6 0 8" fill="none" stroke="#fff" stroke-width="1.100"/><path d="M13 2.500c3 3 3 8 0 11" fill="none" stroke="#777"/></svg>
    <svg class="size-4" viewBox="0 0 16 16"><path d="M2.500 4.500h11v6h-11zM8 1.500V15" fill="none" stroke="#fff" stroke-width="1.400"/></svg>
    <svg class="ml-[5px] size-4"><use href="#sogou"/></svg>
    <time class="ml-2.5 font-['Open_Sans',sans-serif] text-xs">17:23</time>
    <svg class="ml-2.5 size-4" viewBox="0 0 16 16"><path d="M.7 1.500h14.600v11H10L8 15l-2-2.500H.7z" fill="none" stroke="#fff" stroke-width="1.200"/></svg>
    <span class="ml-3 mr-[3px] h-[30px] w-px bg-[#777]"></span>
  </div>
</footer>
</body>
</html>
